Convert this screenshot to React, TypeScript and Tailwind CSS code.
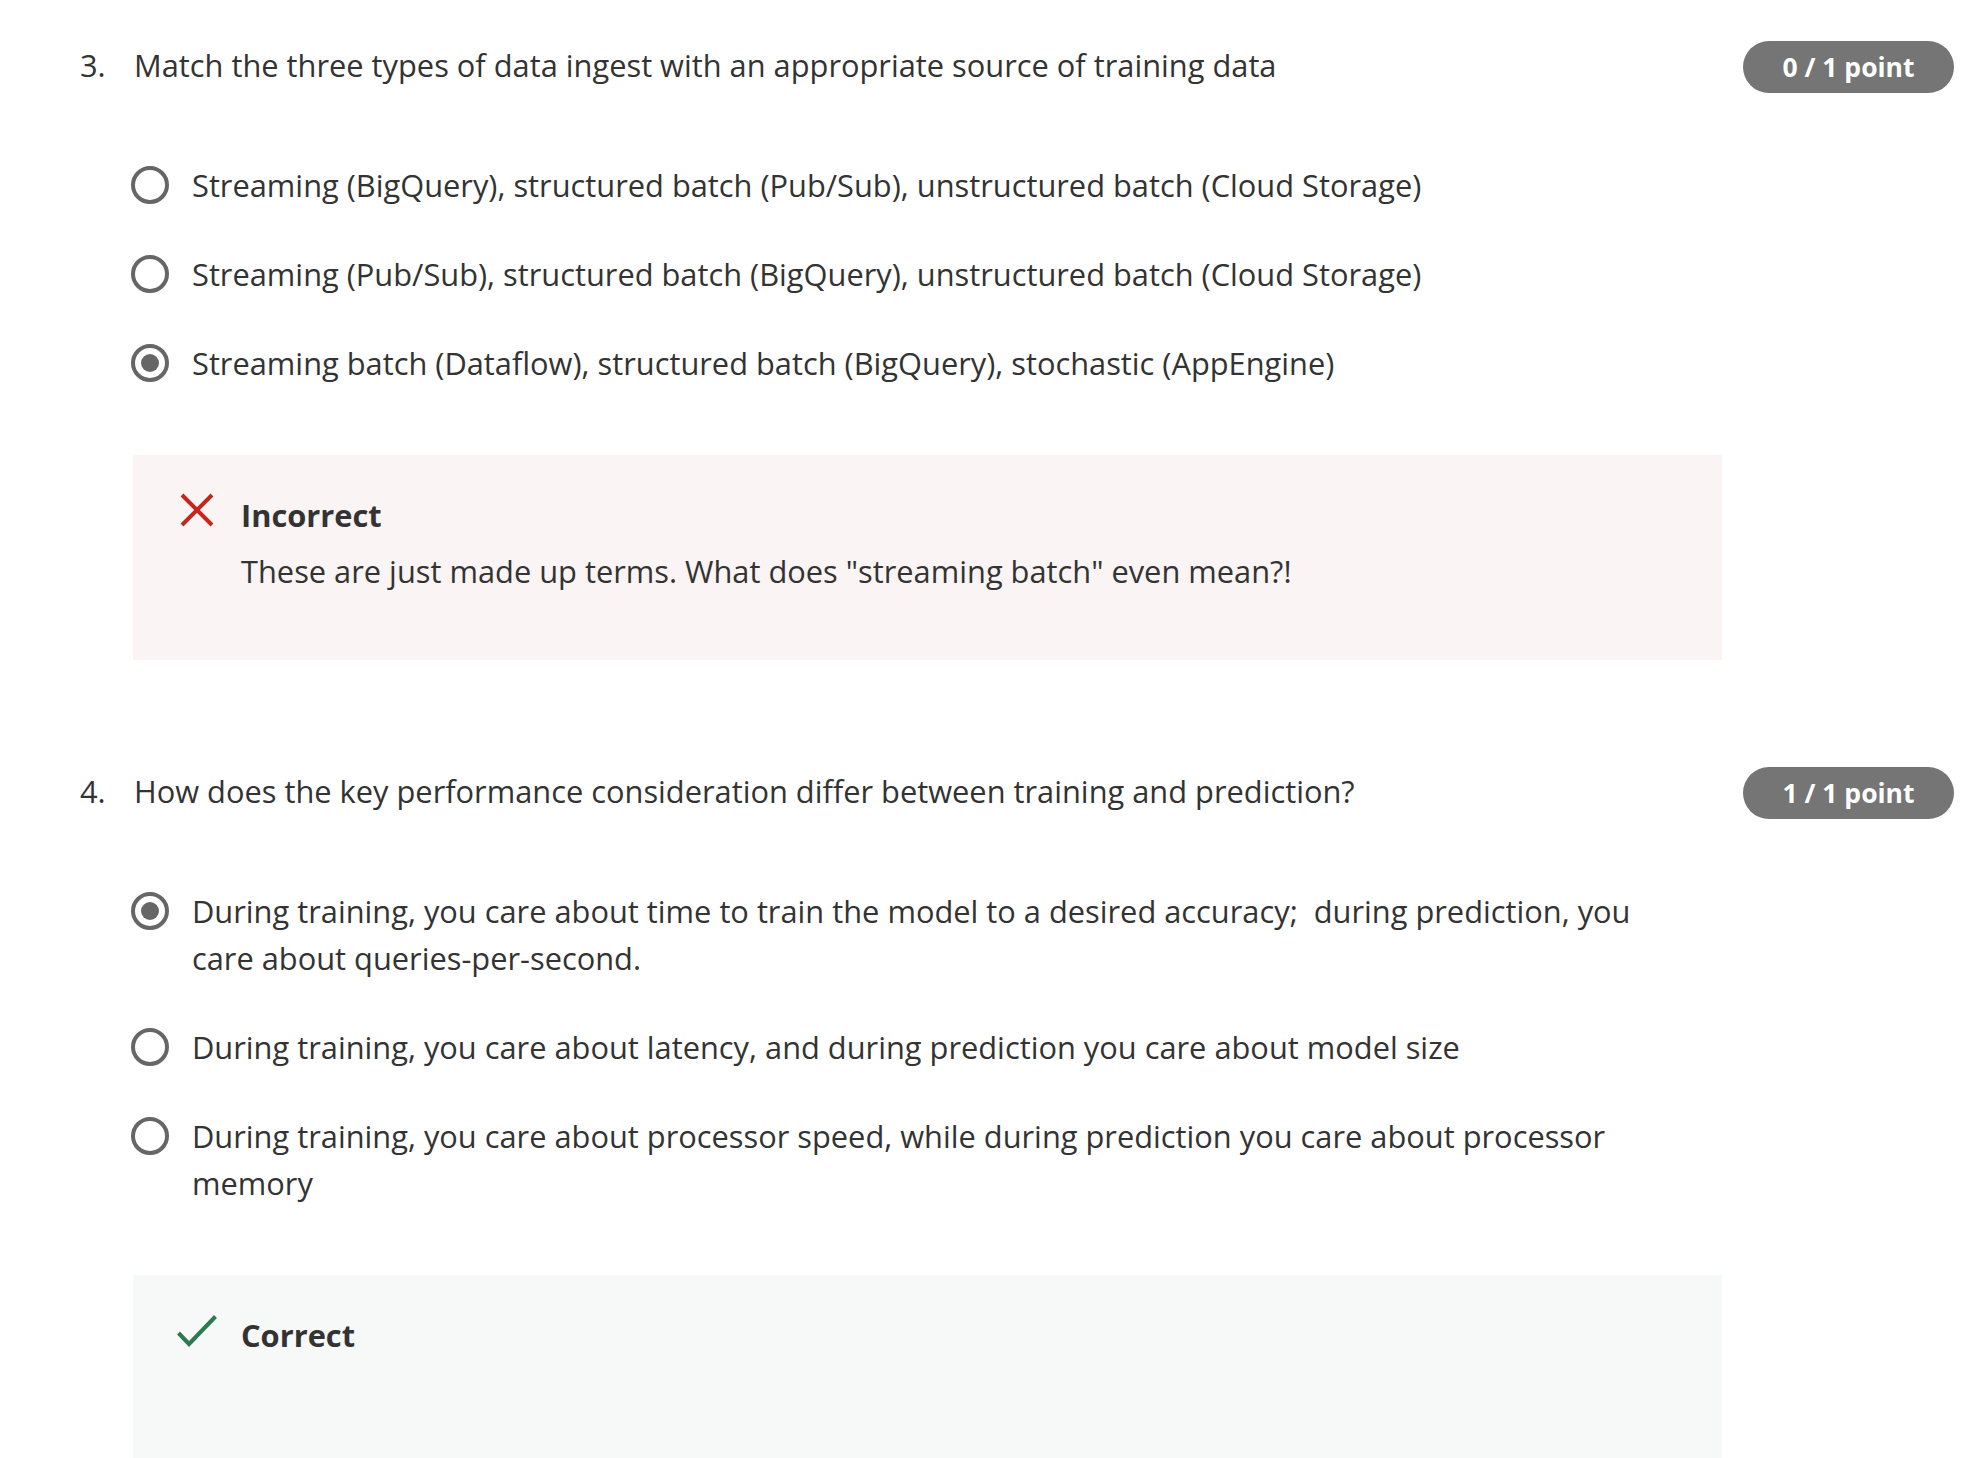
import type React from "react"

interface QuestionData {
    num: string
    title: string
    badge: string
    options: string[]
    selected: number
    correct: boolean
    explanation?: string
}

const questions: QuestionData[] = [
    {
        num: "3.",
        title: "Match the three types of data ingest with an appropriate source of training data",
        badge: "0 / 1 point",
        options: [
            "Streaming (BigQuery), structured batch (Pub/Sub), unstructured batch (Cloud Storage)",
            "Streaming (Pub/Sub), structured batch (BigQuery), unstructured batch (Cloud Storage)",
            "Streaming batch (Dataflow), structured batch (BigQuery), stochastic (AppEngine)",
        ],
        selected: 2,
        correct: false,
        explanation: 'These are just made up terms. What does "streaming batch" even mean?!',
    },
    {
        num: "4.",
        title: "How does the key performance consideration differ between training and prediction?",
        badge: "1 / 1 point",
        options: [
            "During training, you care about time to train the model to a desired accuracy;\u00a0 during prediction, you care about queries-per-second.",
            "During training, you care about latency, and during prediction you care about model size",
            "During training, you care about processor speed, while during prediction you care about processor memory",
        ],
        selected: 0,
        correct: true,
    },
]

const Radio: React.FC<{ checked: boolean }> = ({ checked }) => (
    <span className="mt-[4px] flex h-[38px] w-[38px] shrink-0 items-center justify-center rounded-full border-[4px] border-[#666666]">
        {checked && <span className="h-[18px] w-[18px] rounded-full bg-[#666666]" />}
    </span>
)

const CrossIcon = () => (
    <svg width="40" height="36" viewBox="0 0 40 36" className="shrink-0">
        <path d="M5 3 L35 33 M35 3 L5 33" stroke="#c4261d" strokeWidth="4" fill="none" />
    </svg>
)

const CheckIcon = () => (
    <svg width="40" height="36" viewBox="0 0 40 36" className="shrink-0">
        <path d="M1.5 21 L12 32 L38.5 4.5" stroke="#2e7a4f" strokeWidth="4" fill="none" />
    </svg>
)

const Question: React.FC<{ q: QuestionData }> = ({ q }) => (
    <section>
        {/* heading row */}
        <div className="flex items-start">
            <span className="w-[54px] shrink-0 text-[30.8px] leading-[46px]">{q.num}</span>
            <p className="flex-1 text-[30.8px] leading-[46px]">{q.title}</p>
            <span className="-mt-px h-[52px] w-[211px] shrink-0 rounded-full bg-[#757575] text-center text-[26.5px] font-bold leading-[52px] text-white">
                {q.badge}
            </span>
        </div>

        {/* options */}
        <div className="ml-[51px] mt-[69px] flex w-[1529px] flex-col gap-[42px]">
            {q.options.map((opt, i) => (
                <label key={i} className="flex items-start gap-[23px]">
                    <Radio checked={i === q.selected} />
                    <span className="text-[30.8px] leading-[47px]">{opt}</span>
                </label>
            ))}
        </div>

        {/* feedback */}
        <div
            className={
                "ml-[53px] mt-[68px] w-[1589px] pl-[44px] pt-[37px] " +
                (q.correct ? "min-h-[207px] bg-[#f7f9f8] pb-[67px]" : "bg-[#faf4f4] pb-[66px]")
            }
        >
            <div className="flex items-start gap-[24px]">
                {q.correct ? <CheckIcon /> : <CrossIcon />}
                <div>
                    <p className="text-[30.8px] font-bold leading-[46px]">{q.correct ? "Correct" : "Incorrect"}</p>
                    {q.explanation && <p className="mt-[10px] text-[30.8px] leading-[46px]">{q.explanation}</p>}
                </div>
            </div>
        </div>
    </section>
)

export default function App() {
    return (
        <div className="min-h-screen bg-white font-['Open_Sans',sans-serif] text-[#333333]">
            <div className="flex flex-col gap-[108px] pl-[80px] pr-[26px] pt-[42px]">
                {questions.map((q) => (
                    <Question key={q.num} q={q} />
                ))}
            </div>
        </div>
    )
}
